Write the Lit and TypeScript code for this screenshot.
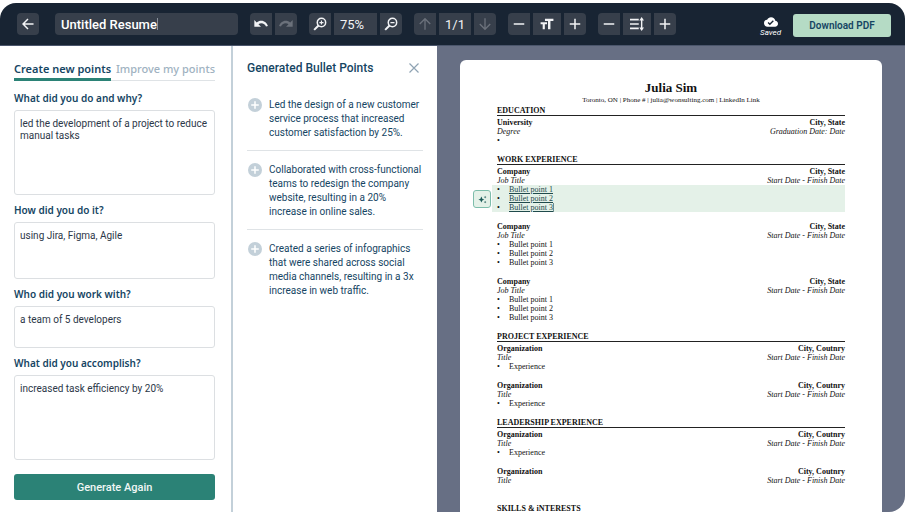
import { LitElement, html, svg, css, nothing } from "lit";
import { customElement, property } from "lit/decorators.js";
import { classMap } from "lit/directives/class-map.js";

const icon = (size: number, body: unknown) =>
  html`<svg width=${size} height=${size} viewBox="0 0 24 24" fill="currentColor" aria-hidden="true">${body}</svg>`;

const glyphs = {
  back: svg`<path d="M21.500 12H3.500M12 3.500L3.500 12l8.500 8.500" fill="none" stroke="currentColor" stroke-width="2.500"/>`,
  undo: svg`<path d="M12.500 7c-2.650 0-5.050.99-6.900 2.600L2 6v10h10l-3.800-3.800c1.200-.9 2.600-1.500 4.300-1.500 3.300 0 6 2 7 5.100l2.900-.9C21.080 10.400 17.150 7 12.500 7z"/>`,
  redo: svg`<path d="M11.500 7c2.650 0 5.050.99 6.900 2.600L22 6v10H12l3.800-3.800c-1.200-.9-2.600-1.500-4.300-1.500-3.300 0-6 2-7 5.100l-2.900-.9C2.920 10.400 6.850 7 11.500 7z"/>`,
  zoomIn: svg`<circle cx="14.500" cy="9.500" r="7.200" fill="none" stroke="currentColor" stroke-width="2.600"/><path d="M9.500 14.500L2 22" stroke="currentColor" stroke-width="3.400"/><path d="M14.500 6v7M11 9.500h7" stroke="currentColor" stroke-width="2"/>`,
  zoomOut: svg`<circle cx="14.500" cy="9.500" r="7.200" fill="none" stroke="currentColor" stroke-width="2.600"/><path d="M9.500 14.500L2 22" stroke="currentColor" stroke-width="3.400"/><path d="M11 9.500h7" stroke="currentColor" stroke-width="2"/>`,
  up: svg`<path d="M12 22V3M3 12l9-9 9 9" fill="none" stroke="currentColor" stroke-width="2.300"/>`,
  down: svg`<path d="M12 2v19M3 12l9 9 9-9" fill="none" stroke="currentColor" stroke-width="2.300"/>`,
  minus: svg`<path d="M3 12h18" stroke="currentColor" stroke-width="2.600"/>`,
  plus: svg`<path d="M3 12h18M12 3v18" stroke="currentColor" stroke-width="2.600"/>`,
  textSize: svg`<path d="M8.500 3v3.800h5.200V21h4.200V6.800H23V3zM1 12.300h3.600V21h3.700v-8.700H12V9H1z"/>`,
  lineHeight: svg`<path d="M0 4.500h15M0 12h15M0 19.500h15" stroke="currentColor" stroke-width="2.600"/><path d="M20 4v16" stroke="currentColor" stroke-width="2.400"/><path d="M20 0l4 6h-8zM20 24l4-6h-8z"/>`,
  cloud: svg`<path fill-rule="evenodd" d="M19.350 10.040A7.490 7.490 0 0 0 12 4C9.110 4 6.600 5.640 5.350 8.040A5.994 5.994 0 0 0 0 14c0 3.310 2.690 6 6 6h13c2.760 0 5-2.240 5-5 0-2.640-2.050-4.780-4.650-4.960zM10 17.500l-3.800-3.800 1.600-1.600 2.200 2.200 5.200-5.200 1.600 1.600z"/>`,
  close: svg`<path d="M3 3l18 18M21 3L3 21" fill="none" stroke="currentColor" stroke-width="2.400"/>`,
  add: svg`<circle cx="12" cy="12" r="12"/><path d="M12 5.500v13M5.500 12h13" stroke="#fff" stroke-width="2.600"/>`,
  sparkle: svg`<path d="M9 4q1 7 8 8q-7 1-8 8q-1-7-8-8q7-1 8-8zM19 2q.4 3 3.500 3.500Q19.400 6 19 9q-.4-3-3.500-3.500Q18.600 5 19 2zM19 15q.4 3 3.500 3.500q-3.100.5-3.500 3.500q-.4-3-3.500-3.500q3.100-.5 3.500-3.500z"/>`,
};

@customElement("editor-toolbar")
export class EditorToolbar extends LitElement {
  static styles = css`
    :host {
      display: flex;
      align-items: center;
      box-sizing: border-box;
      height: 43px;
      padding: 0 14px 0 17px;
      background: #182433;
      border-bottom: 1px solid #4b566c;
      color: #fff;
      font-family: Roboto, sans-serif;
    }
    button {
      font: inherit;
      color: inherit;
      border: 0;
      padding: 0;
      cursor: pointer;
    }
    .group {
      display: flex;
      gap: 3px;
      margin-right: 12px;
      border-radius: 4px;
      overflow: hidden;
      flex: none;
    }
    .group.first {
      margin-right: 16px;
    }
    .cell {
      display: flex;
      align-items: center;
      justify-content: center;
      width: 22px;
      height: 22px;
      background: #373f4b;
      font-size: 13px;
      color: #f2f3f5;
    }
    .cell.wide {
      width: 28px;
    }
    .cell.page {
      width: 32px;
    }
    .cell.percent {
      box-sizing: border-box;
      width: 43px;
      padding-left: 6px;
      justify-content: flex-start;
    }
    .cell.off {
      color: #6b717b;
    }
    .title {
      display: flex;
      align-items: center;
      box-sizing: border-box;
      flex: 0 1 183px;
      height: 22px;
      margin-right: 12px;
      padding: 0 6px;
      border-radius: 4px;
      background: #373f4b;
    }
    .name {
      field-sizing: content;
      border: 0;
      padding: 0;
      outline: 0;
      background: none;
      color: #fff;
      font: 500 13px Roboto, sans-serif;
    }
    .caret {
      width: 1px;
      height: 12px;
      background: #8b929c;
    }
    .saved {
      display: flex;
      flex-direction: column;
      align-items: center;
      margin: 4px 12px 0 auto;
      font-size: 8px;
      line-height: 10px;
      font-style: italic;
    }
    .saved svg {
      margin-bottom: -1px;
    }
    .download {
      flex: none;
      width: 98px;
      height: 23px;
      margin-top: 2px;
      border-radius: 3px;
      background: #b5dbc5;
      color: #154563;
      font-size: 10px;
      font-weight: 600;
    }
  `;

  private cell(label: string, glyph: unknown, size = 12, extra = "") {
    return html`<button class=${`cell ${extra}`} aria-label=${label}>${icon(size, glyph)}</button>`;
  }

  render() {
    return html`
      <div class="group first">${this.cell("Back", glyphs.back, 14)}</div>
      <div class="title">
        <input class="name" aria-label="Resume title" value="Untitled Resume" /><span class="caret"></span>
      </div>
      <div class="group">
        ${this.cell("Undo", glyphs.undo, 16)}${this.cell("Redo", glyphs.redo, 16, "off")}
      </div>
      <div class="group">
        ${this.cell("Zoom in", glyphs.zoomIn, 14)}
        <span class="cell percent">75%</span>
        ${this.cell("Zoom out", glyphs.zoomOut, 14)}
      </div>
      <div class="group">
        ${this.cell("Previous page", glyphs.up, 14, "off")}
        <span class="cell page">1/1</span>
        ${this.cell("Next page", glyphs.down, 14, "off")}
      </div>
      <div class="group">
        ${this.cell("Smaller text", glyphs.minus, 14)}
        ${this.cell("Text size", glyphs.textSize, 14, "wide")}
        ${this.cell("Larger text", glyphs.plus, 14)}
      </div>
      <div class="group">
        ${this.cell("Less line spacing", glyphs.minus, 14)}
        ${this.cell("Line spacing", glyphs.lineHeight, 14, "wide")}
        ${this.cell("More line spacing", glyphs.plus, 14)}
      </div>
      <div class="saved">${icon(14, glyphs.cloud)}<span>Saved</span></div>
      <button class="download">Download PDF</button>
    `;
  }
}

const questions = [
  { id: "what", label: "What did you do and why?", size: "large", value: "led the development of a project to reduce manual tasks" },
  { id: "how", label: "How did you do it?", size: "medium", value: "using Jira, Figma, Agile" },
  { id: "who", label: "Who did you work with?", size: "small", value: "a team of 5 developers" },
  { id: "result", label: "What did you accomplish?", size: "large", value: "increased task efficiency by 20%" },
];

@customElement("point-form")
export class PointForm extends LitElement {
  static styles = css`
    :host {
      display: block;
      box-sizing: border-box;
      padding: 15px 16px 12px 14px;
      font-family: Roboto, sans-serif;
    }
    .tabs {
      display: flex;
      justify-content: space-between;
      margin-bottom: 10px;
      box-shadow: inset 0 -1px #dfe3e6;
    }
    .tab {
      height: 20px;
      padding: 0 0 2px;
      border: 0;
      border-bottom: 3px solid transparent;
      background: none;
      color: #a0b2c1;
      font: 500 11px/15px "Noto Sans", sans-serif;
      white-space: nowrap;
      cursor: pointer;
    }
    .tab.active {
      color: #154563;
      border-bottom-color: #2b8276;
      font-weight: 600;
    }
    .field {
      display: block;
      margin-bottom: 8px;
    }
    .label {
      display: block;
      margin-bottom: 4px;
      color: #154563;
      font: 600 10px/15px "Noto Sans", sans-serif;
    }
    .box {
      display: block;
      box-sizing: border-box;
      width: 100%;
      padding: 7px 5px;
      border: 1px solid #dcdfe2;
      border-radius: 3px;
      resize: none;
      outline: 0;
      color: #2c3748;
      font: 10px/12px Roboto, sans-serif;
    }
    .large {
      height: 85px;
    }
    .medium {
      height: 57px;
    }
    .small {
      height: 42px;
    }
    .submit {
      width: 100%;
      height: 26px;
      margin-top: 6px;
      border: 0;
      border-radius: 3px;
      background: #2b8276;
      color: #f0f7f5;
      font: 500 11px Roboto, sans-serif;
      cursor: pointer;
    }
  `;

  render() {
    return html`
      <div class="tabs" role="tablist">
        <button class="tab active" role="tab" aria-selected="true">Create new points</button>
        <button class="tab" role="tab" aria-selected="false">Improve my points</button>
      </div>
      ${questions.map(
        (q) => html`<div class="field">
          <label class="label" for=${q.id}>${q.label}</label>
          <textarea id=${q.id} class=${`box ${q.size}`} spellcheck="false" .value=${q.value}></textarea>
        </div>`,
      )}
      <button class="submit">Generate Again</button>
    `;
  }
}

const generated = [
  "Led the design of a new customer service process that increased customer satisfaction by 25%.",
  "Collaborated with cross-functional teams to redesign the company website, resulting in a 20% increase in online sales.",
  "Created a series of infographics that were shared across social media channels, resulting in a 3x increase in web traffic.",
];

@customElement("generated-points")
export class GeneratedPoints extends LitElement {
  static styles = css`
    :host {
      display: block;
      box-sizing: border-box;
      padding: 14px 14px 0;
      color: #154563;
      font-family: Roboto, sans-serif;
    }
    .head {
      display: flex;
      align-items: center;
      justify-content: space-between;
      padding-right: 3px;
    }
    .heading {
      margin: 0;
      font-size: 12px;
      line-height: 16px;
      font-weight: 500;
    }
    button {
      display: flex;
      flex: none;
      padding: 0;
      border: 0;
      background: none;
      cursor: pointer;
    }
    .close {
      color: #8fa3b3;
    }
    .list {
      margin: 10px 0 0;
      padding: 0;
      list-style: none;
    }
    .item {
      display: flex;
      align-items: flex-start;
      gap: 7px;
      padding: 12px 0 10px 1px;
      font-size: 10px;
      line-height: 14px;
    }
    .item + .item {
      border-top: 1px solid #dfe3e6;
    }
    .add {
      color: #c3d0d9;
    }
  `;

  render() {
    return html`
      <div class="head">
        <h2 class="heading">Generated Bullet Points</h2>
        <button class="close" aria-label="Close">${icon(12, glyphs.close)}</button>
      </div>
      <ul class="list">
        ${generated.map(
          (text) => html`<li class="item">
            <button class="add" aria-label="Add point">${icon(14, glyphs.add)}</button>
            <span>${text}</span>
          </li>`,
        )}
      </ul>
    `;
  }
}

interface Entry {
  name: string;
  role: string;
  place: string;
  date: string;
  points: string[];
  selected?: boolean;
}

const threePoints = ["Bullet point 1", "Bullet point 2", "Bullet point 3"];
const job = { name: "Company", role: "Job Title", place: "City, State", date: "Start Date - Finish Date", points: threePoints };
const org = { name: "Organization", role: "Title", place: "City, Coutnry", date: "Start Date - Finish Date", points: ["Experience"] };

const sections: { heading: string; entries: Entry[] }[] = [
  {
    heading: "EDUCATION",
    entries: [{ name: "University", role: "Degree", place: "City, State", date: "Graduation Date: Date", points: [""] }],
  },
  { heading: "WORK EXPERIENCE", entries: [{ ...job, selected: true }, job, job] },
  { heading: "PROJECT EXPERIENCE", entries: [org, org] },
  { heading: "LEADERSHIP EXPERIENCE", entries: [org, { ...org, points: [] }] },
  { heading: "SKILLS & iNTERESTS", entries: [] },
];

@customElement("resume-entry")
export class ResumeEntry extends LitElement {
  @property({ attribute: false }) entry!: Entry;

  static styles = css`
    :host {
      display: block;
    }
    .row {
      display: flex;
      justify-content: space-between;
    }
    .strong {
      font-weight: bold;
    }
    .role {
      font-style: italic;
    }
    .points {
      position: relative;
      min-height: 9px;
      margin: 0 0 1px -5px;
      padding: 0 0 0 5px;
      list-style: none;
    }
    .point {
      display: flex;
    }
    .point::before {
      content: "•";
      width: 12px;
    }
    .selected {
      background: #e4f1e8;
    }
    .selected .text {
      color: #1f4a4c;
      text-decoration: underline;
    }
    .selected .point:last-of-type .text {
      border-right: 1px solid #6d8a8c;
    }
    .assist {
      position: absolute;
      left: -19px;
      top: 5px;
      display: flex;
      align-items: center;
      justify-content: center;
      width: 18px;
      height: 18px;
      padding: 0;
      border: 1px solid #7dbdab;
      border-radius: 3px;
      background: #e4f1e8;
      color: #1c5a58;
      cursor: pointer;
    }
  `;

  render() {
    const e = this.entry;
    return html`
      <div class="row strong"><span>${e.name}</span><span>${e.place}</span></div>
      <div class="row role"><span>${e.role}</span><span>${e.date}</span></div>
      <ul class=${classMap({ points: true, selected: !!e.selected })}>
        ${e.points.map((p) => html`<li class="point"><span class="text">${p}</span></li>`)}
        ${e.selected
          ? html`<button class="assist" aria-label="Improve these points">${icon(9, glyphs.sparkle)}</button>`
          : nothing}
      </ul>
    `;
  }
}

@customElement("resume-page")
export class ResumePage extends LitElement {
  static styles = css`
    :host {
      display: block;
      box-sizing: border-box;
      min-height: 547px;
      padding: 21px 37px 36px;
      border-radius: 6px;
      background: #fff;
      color: #111;
      font: 8px/9px "Liberation Serif", serif;
    }
    .name {
      margin: 0;
      text-align: center;
      font-size: 13px;
      line-height: 14px;
    }
    .contact {
      margin: 0 0 1px;
      text-align: center;
      font-size: 7px;
      line-height: 10px;
    }
    .section {
      display: flex;
      flex-direction: column;
      gap: 9px;
      margin-bottom: 9px;
    }
    .heading {
      margin: 0 0 -7px;
      border-bottom: 1px solid #222;
      font-size: 8px;
      line-height: 9px;
    }
  `;

  render() {
    return html`
      <h1 class="name">Julia Sim</h1>
      <p class="contact">Toronto, ON | Phone # | julia@wonsulting.com | LinkedIn Link</p>
      ${sections.map(
        (s) => html`<section class="section">
          <h2 class="heading">${s.heading}</h2>
          ${s.entries.map((e) => html`<resume-entry .entry=${e}></resume-entry>`)}
        </section>`,
      )}
    `;
  }
}

@customElement("app-root")
export class AppRoot extends LitElement {
  static styles = css`
    :host {
      display: block;
      box-sizing: border-box;
      height: 100vh;
      padding: 3px 0;
      background: #fff;
    }
    .window {
      display: flex;
      flex-direction: column;
      height: 100%;
      border-radius: 16px;
      overflow: hidden;
    }
    .body {
      display: flex;
      flex: 1;
      min-height: 0;
    }
    .form {
      flex: 0 0 231px;
      overflow: hidden;
    }
    .results {
      flex: 0 0 206px;
      border-left: 2px solid #c3d0d9;
      overflow: hidden;
    }
    .workspace {
      flex: 1;
      min-width: 0;
      padding: 14px 23px 0;
      background: #676f84;
      overflow: auto;
      scrollbar-width: none;
    }
  `;

  render() {
    return html`
      <div class="window">
        <editor-toolbar></editor-toolbar>
        <main class="body">
          <point-form class="form"></point-form>
          <generated-points class="results"></generated-points>
          <div class="workspace"><resume-page></resume-page></div>
        </main>
      </div>
    `;
  }
}
